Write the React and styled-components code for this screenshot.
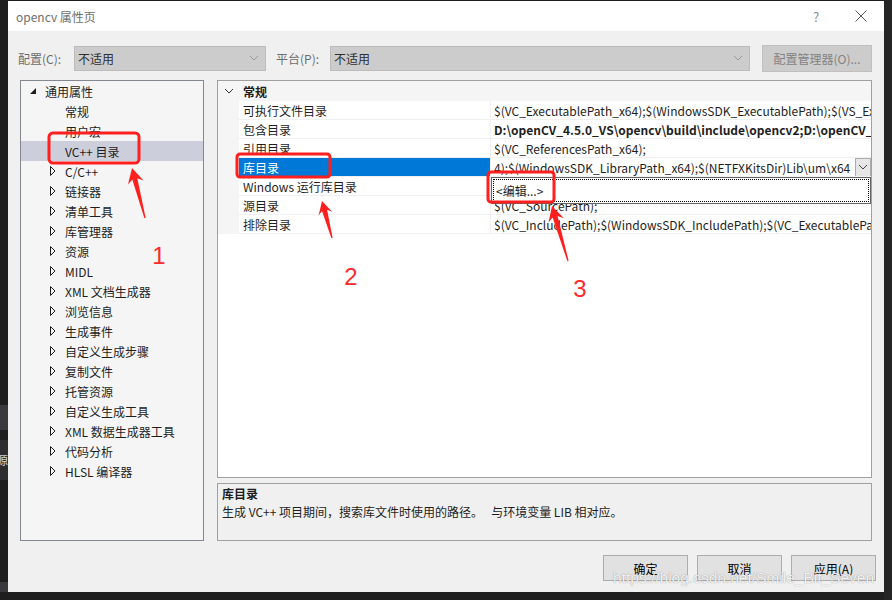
import React from "react";
import styled, { createGlobalStyle } from "styled-components";

const GlobalStyle = createGlobalStyle`
  html, body {
    margin: 0;
    padding: 0;
    background: #1e1e1e;
  }
  body {
    font-family: "Noto Sans CJK SC", "Noto Sans", sans-serif;
    font-size: 12px;
    color: #1e1e1e;
  }
`;

const Screen = styled.div`
  position: relative;
  width: 892px;
  height: 600px;
  overflow: hidden;
  display: flex;
  background: #1f1f1f;
`;

const SideStrip = styled.div`
  width: ${(p) => p.$w}px;
  flex-shrink: 0;
  display: flex;
  flex-direction: column;
  background: ${(p) => p.$bg};
`;

const Band = styled.div`
  height: ${(p) => p.$h}px;
  background: ${(p) => p.$c};
  color: #d0d0d0;
  font-size: 12px;
  line-height: ${(p) => p.$h}px;
  overflow: hidden;
  white-space: nowrap;
  text-indent: -4px;
`;

const Dialog = styled.div`
  width: 876px;
  height: 591px;
  margin-top: 1px;
  background: #f0f0f0;
  display: flex;
  flex-direction: column;
  flex-shrink: 0;
`;

const TitleBar = styled.div`
  height: 30px;
  background: #ffffff;
  display: flex;
  align-items: center;
  padding-left: 8px;
`;

const Title = styled.div`
  flex: 1;
  color: #6f6f6f;
  font-size: 12px;
`;

const HelpGlyph = styled.div`
  width: 20px;
  text-align: center;
  color: #8a8a8a;
  font-size: 13px;
  margin-right: 12px;
`;

const CloseBox = styled.div`
  width: 46px;
  height: 30px;
  display: flex;
  align-items: center;
  justify-content: center;
`;

const Toolbar = styled.div`
  height: 26px;
  margin-top: 14px;
  padding-left: 10px;
  display: flex;
  align-items: center;
`;

const Label = styled.div`
  width: ${(p) => p.$w}px;
  margin-left: ${(p) => p.$ml || 0}px;
  color: #6d6d6d;
  white-space: nowrap;
`;

const Combo = styled.div`
  box-sizing: border-box;
  width: ${(p) => p.$w}px;
  height: 25px;
  background: #cccccc;
  border: 1px solid #bcbcbc;
  display: flex;
  align-items: center;
  justify-content: space-between;
  padding: 0 6px 0 3px;
  color: #2e2e2e;
`;

const ToolButton = styled.div`
  box-sizing: border-box;
  width: 110px;
  height: 27px;
  margin-left: 12px;
  background: #cccccc;
  border: 1px solid #bfbfbf;
  color: #838383;
  display: flex;
  align-items: center;
  justify-content: center;
`;

const Main = styled.div`
  height: 461px;
  margin-top: 9px;
  padding: 0 12px;
  display: flex;
  gap: 13px;
`;

const Tree = styled.div`
  box-sizing: border-box;
  width: 184px;
  height: 461px;
  border: 1px solid #828790;
  background: #f5f5f5;
  display: flex;
  flex-direction: column;
`;

const TreeRow = styled.div`
  height: 20px;
  display: flex;
  align-items: center;
  padding-left: ${(p) => (p.$level === 0 ? 9 : 29)}px;
  gap: 9px;
  background: ${(p) => (p.$selected ? "#cccedb" : "transparent")};
  white-space: nowrap;
  color: #1e1e1e;
`;

const ExpanderBox = styled.span`
  width: 6px;
  height: 10px;
  display: flex;
  align-items: center;
  flex-shrink: 0;
`;

const RightColumn = styled.div`
  width: 655px;
  display: flex;
  flex-direction: column;
  gap: 5px;
`;

const Grid = styled.div`
  position: relative;
  box-sizing: border-box;
  height: 398px;
  border: 1px solid #a0a0a0;
  background: #ffffff;
  overflow: hidden;
`;

const GridRow = styled.div`
  display: grid;
  grid-template-columns: 21px 252px 1fr;
  height: ${(p) => (p.$header ? 20 : 19)}px;
  background: ${(p) => (p.$header ? "#f5f5f5" : "#ffffff")};
`;

const Margin = styled.div`
  background: #f5f5f5;
  display: flex;
  align-items: center;
  justify-content: center;
`;

const NameCell = styled.div`
  box-sizing: border-box;
  padding-left: 4px;
  display: flex;
  align-items: center;
  white-space: nowrap;
  border-bottom: ${(p) => (p.$header ? "none" : "1px solid #f0f0f0")};
  border-right: ${(p) => (p.$header ? "none" : "1px solid #f0f0f0")};
  background: ${(p) => (p.$selected ? "#0078d7" : "transparent")};
  color: ${(p) => (p.$selected ? "#ffffff" : "#1e1e1e")};
  font-weight: ${(p) => (p.$header ? 700 : 400)};
`;

const ValueCell = styled.div`
  box-sizing: border-box;
  display: flex;
  align-items: center;
  overflow: hidden;
  border-bottom: 1px solid #f0f0f0;
  padding-left: 3px;
  white-space: nowrap;
  font-weight: ${(p) => (p.$bold ? 700 : 400)};
`;

const ValueText = styled.span`
  flex: 1;
  overflow: hidden;
`;

const DropButton = styled.div`
  box-sizing: border-box;
  width: 16px;
  height: 19px;
  flex-shrink: 0;
  background: #e6e6e6;
  border: 1px solid #acacac;
  display: flex;
  align-items: center;
  justify-content: center;
`;

const EditPopup = styled.div`
  position: absolute;
  left: 273px;
  right: 0;
  top: 96px;
  height: 27px;
  box-sizing: border-box;
  border: 1px solid #646464;
  background: #ffffff;
  padding: 1px;
`;

const EditItem = styled.div`
  box-sizing: border-box;
  height: 100%;
  border: 1px dotted #000000;
  display: flex;
  align-items: center;
  padding-left: 2px;
`;

const Description = styled.div`
  box-sizing: border-box;
  height: 58px;
  border: 1px solid #a0a0a0;
  background: #f0f0f0;
  padding: 1px 4px 0;
  line-height: 18px;
  white-space: pre;
`;

const DescTitle = styled.div`
  font-weight: 700;
`;

const Footer = styled.div`
  margin-top: 14px;
  padding-right: 8px;
  display: flex;
  justify-content: flex-end;
  gap: 9px;
`;

const DialogButton = styled.div`
  box-sizing: border-box;
  width: 85px;
  height: 26px;
  background: #e1e1e1;
  border: 1px solid #adadad;
  display: flex;
  align-items: center;
  justify-content: center;
  color: #000000;
`;

const Watermark = styled.div`
  position: absolute;
  left: 613px;
  top: 569px;
  font-family: "Liberation Sans", Arial, sans-serif;
  font-size: 15.5px;
  color: rgba(255, 255, 255, 0.9);
  text-shadow: 0 0 1px rgba(80, 80, 80, 0.7);
  white-space: nowrap;
  pointer-events: none;
`;

const Marks = styled.svg`
  position: absolute;
  left: 0;
  top: 0;
  pointer-events: none;
`;

const Chevron = ({ color = "#9a9a9a", size = 8 }) => (
  <svg width={size + 2} height={size} viewBox="0 0 10 8">
    <polyline points="1,2 5,6 9,2" fill="none" stroke={color} strokeWidth="1" />
  </svg>
);

const Expander = ({ state }) => (
  <ExpanderBox>
    {state === "open" && (
      <svg width="6" height="6" viewBox="0 0 6 6">
        <polygon points="6,0 6,6 0,6" fill="#1e1e1e" />
      </svg>
    )}
    {state === "closed" && (
      <svg width="6" height="10" viewBox="0 0 6 10">
        <polygon points="0.5,0.5 5,5 0.5,9.5" fill="none" stroke="#1e1e1e" strokeWidth="1" />
      </svg>
    )}
  </ExpanderBox>
);

// tapered red arrow, tip first then tail
const arrowPoints = (tx, ty, bx, by, head = 15, wing = 8) => {
  const dx = tx - bx;
  const dy = ty - by;
  const len = Math.hypot(dx, dy);
  const ux = dx / len;
  const uy = dy / len;
  const nx = -uy;
  const ny = ux;
  const hx = tx - ux * head;
  const hy = ty - uy * head;
  const jx = tx - ux * head * 0.75;
  const jy = ty - uy * head * 0.75;
  const pts = [
    [tx, ty],
    [hx + nx * wing, hy + ny * wing],
    [jx + nx * 2.6, jy + ny * 2.6],
    [bx + nx * 0.6, by + ny * 0.6],
    [bx - nx * 0.6, by - ny * 0.6],
    [jx - nx * 2.6, jy - ny * 2.6],
    [hx - nx * wing, hy - ny * wing],
  ];
  return pts.map((p) => p.map((v) => v.toFixed(1)).join(",")).join(" ");
};

const treeItems = [
  { label: "通用属性", level: 0, state: "open" },
  { label: "常规", level: 1, state: "none" },
  { label: "用户宏", level: 1, state: "none" },
  { label: "VC++ 目录", level: 1, state: "none", selected: true },
  { label: "C/C++", level: 1, state: "closed" },
  { label: "链接器", level: 1, state: "closed" },
  { label: "清单工具", level: 1, state: "closed" },
  { label: "库管理器", level: 1, state: "closed" },
  { label: "资源", level: 1, state: "closed" },
  { label: "MIDL", level: 1, state: "closed" },
  { label: "XML 文档生成器", level: 1, state: "closed" },
  { label: "浏览信息", level: 1, state: "closed" },
  { label: "生成事件", level: 1, state: "closed" },
  { label: "自定义生成步骤", level: 1, state: "closed" },
  { label: "复制文件", level: 1, state: "closed" },
  { label: "托管资源", level: 1, state: "closed" },
  { label: "自定义生成工具", level: 1, state: "closed" },
  { label: "XML 数据生成器工具", level: 1, state: "closed" },
  { label: "代码分析", level: 1, state: "closed" },
  { label: "HLSL 编译器", level: 1, state: "closed" },
];

const properties = [
  {
    name: "可执行文件目录",
    value: "$(VC_ExecutablePath_x64);$(WindowsSDK_ExecutablePath);$(VS_ExecutablePath);$(MSBuild_ExecutablePath);$(FxCopDir);$(PATH);",
  },
  {
    name: "包含目录",
    value: "D:\\openCV_4.5.0_VS\\opencv\\build\\include\\opencv2;D:\\openCV_4.5.0_VS\\opencv\\build\\include;$(VC_IncludePath);",
    bold: true,
  },
  { name: "引用目录", value: "$(VC_ReferencesPath_x64);" },
  {
    name: "库目录",
    value: "4);$(WindowsSDK_LibraryPath_x64);$(NETFXKitsDir)Lib\\um\\x64",
    selected: true,
  },
  { name: "Windows 运行库目录", value: "" },
  { name: "源目录", value: "$(VC_SourcePath);" },
  {
    name: "排除目录",
    value: "$(VC_IncludePath);$(WindowsSDK_IncludePath);$(VC_ExecutablePath_x64);$(VC_LibraryPath_x64);",
  },
];

const leftBands = [
  [405, "#1e1e1e"],
  [25, "#3a3a3e"],
  [10, "#1e1e1e"],
  [40, "#2d2d30", "源("],
  [102, "#1e1e1e"],
  [10, "#3a3a3e"],
  [8, "#1e1e1e"],
];

export default function App() {
  return (
    <>
      <GlobalStyle />
      <Screen>
        <SideStrip $w={8} $bg="#1e1e1e">
          {leftBands.map(([h, c, t], i) => (
            <Band key={i} $h={h} $c={c}>
              {t}
            </Band>
          ))}
        </SideStrip>

        <Dialog>
          <TitleBar>
            <Title>opencv 属性页</Title>
            <HelpGlyph>?</HelpGlyph>
            <CloseBox>
              <svg width="12" height="12" viewBox="0 0 12 12">
                <path d="M0.5 0.5 L11.5 11.5 M11.5 0.5 L0.5 11.5" stroke="#555" strokeWidth="1" />
              </svg>
            </CloseBox>
          </TitleBar>

          <Toolbar>
            <Label $w={56}>配置(C):</Label>
            <Combo $w={192}>
              <span>不适用</span>
              <Chevron />
            </Combo>
            <Label $w={54} $ml={10}>
              平台(P):
            </Label>
            <Combo $w={420}>
              <span>不适用</span>
              <Chevron />
            </Combo>
            <ToolButton>配置管理器(O)...</ToolButton>
          </Toolbar>

          <Main>
            <Tree>
              {treeItems.map((item) => (
                <TreeRow key={item.label} $level={item.level} $selected={item.selected}>
                  <Expander state={item.state} />
                  <span>{item.label}</span>
                </TreeRow>
              ))}
            </Tree>

            <RightColumn>
              <Grid>
                <GridRow $header>
                  <Margin>
                    <Chevron color="#333" />
                  </Margin>
                  <NameCell $header>常规</NameCell>
                  <span />
                </GridRow>
                {properties.map((p) => (
                  <GridRow key={p.name}>
                    <Margin />
                    <NameCell $selected={p.selected}>{p.name}</NameCell>
                    <ValueCell $bold={p.bold}>
                      <ValueText>{p.value}</ValueText>
                      {p.selected && (
                        <DropButton>
                          <Chevron color="#444" />
                        </DropButton>
                      )}
                    </ValueCell>
                  </GridRow>
                ))}
                <EditPopup>
                  <EditItem>&lt;编辑...&gt;</EditItem>
                </EditPopup>
              </Grid>

              <Description>
                <DescTitle>库目录</DescTitle>
                <div>{"生成 VC++ 项目期间，搜索库文件时使用的路径。   与环境变量 LIB 相对应。"}</div>
              </Description>
            </RightColumn>
          </Main>

          <Footer>
            <DialogButton>确定</DialogButton>
            <DialogButton>取消</DialogButton>
            <DialogButton>应用(A)</DialogButton>
          </Footer>
        </Dialog>

        <SideStrip $w={8} $bg="#252526" />

        <Watermark>https://blog.csdn.net/Smile_Bit_Seven</Watermark>

        <Marks width="892" height="600" viewBox="0 0 892 600">
          <g fill="none" stroke="#ff1f1f" strokeWidth="3">
            <rect x="49" y="133" width="90" height="30" rx="4" />
            <rect x="237" y="154" width="93" height="23" rx="3" />
            <rect x="488" y="172" width="66" height="30" rx="3" />
          </g>
          <g fill="#ff1f1f">
            <polygon points={arrowPoints(132, 168, 145, 218)} />
            <polygon points={arrowPoints(322, 201, 332, 238, 13, 7)} />
            <polygon points={arrowPoints(552, 206, 568, 261)} />
          </g>
          <g fill="#ff2a2a" fontFamily="Liberation Sans, Arial, sans-serif" fontSize="24" textAnchor="middle">
            <text x="159" y="264">1</text>
            <text x="351" y="285">2</text>
            <text x="580" y="297">3</text>
          </g>
        </Marks>
      </Screen>
    </>
  );
}
